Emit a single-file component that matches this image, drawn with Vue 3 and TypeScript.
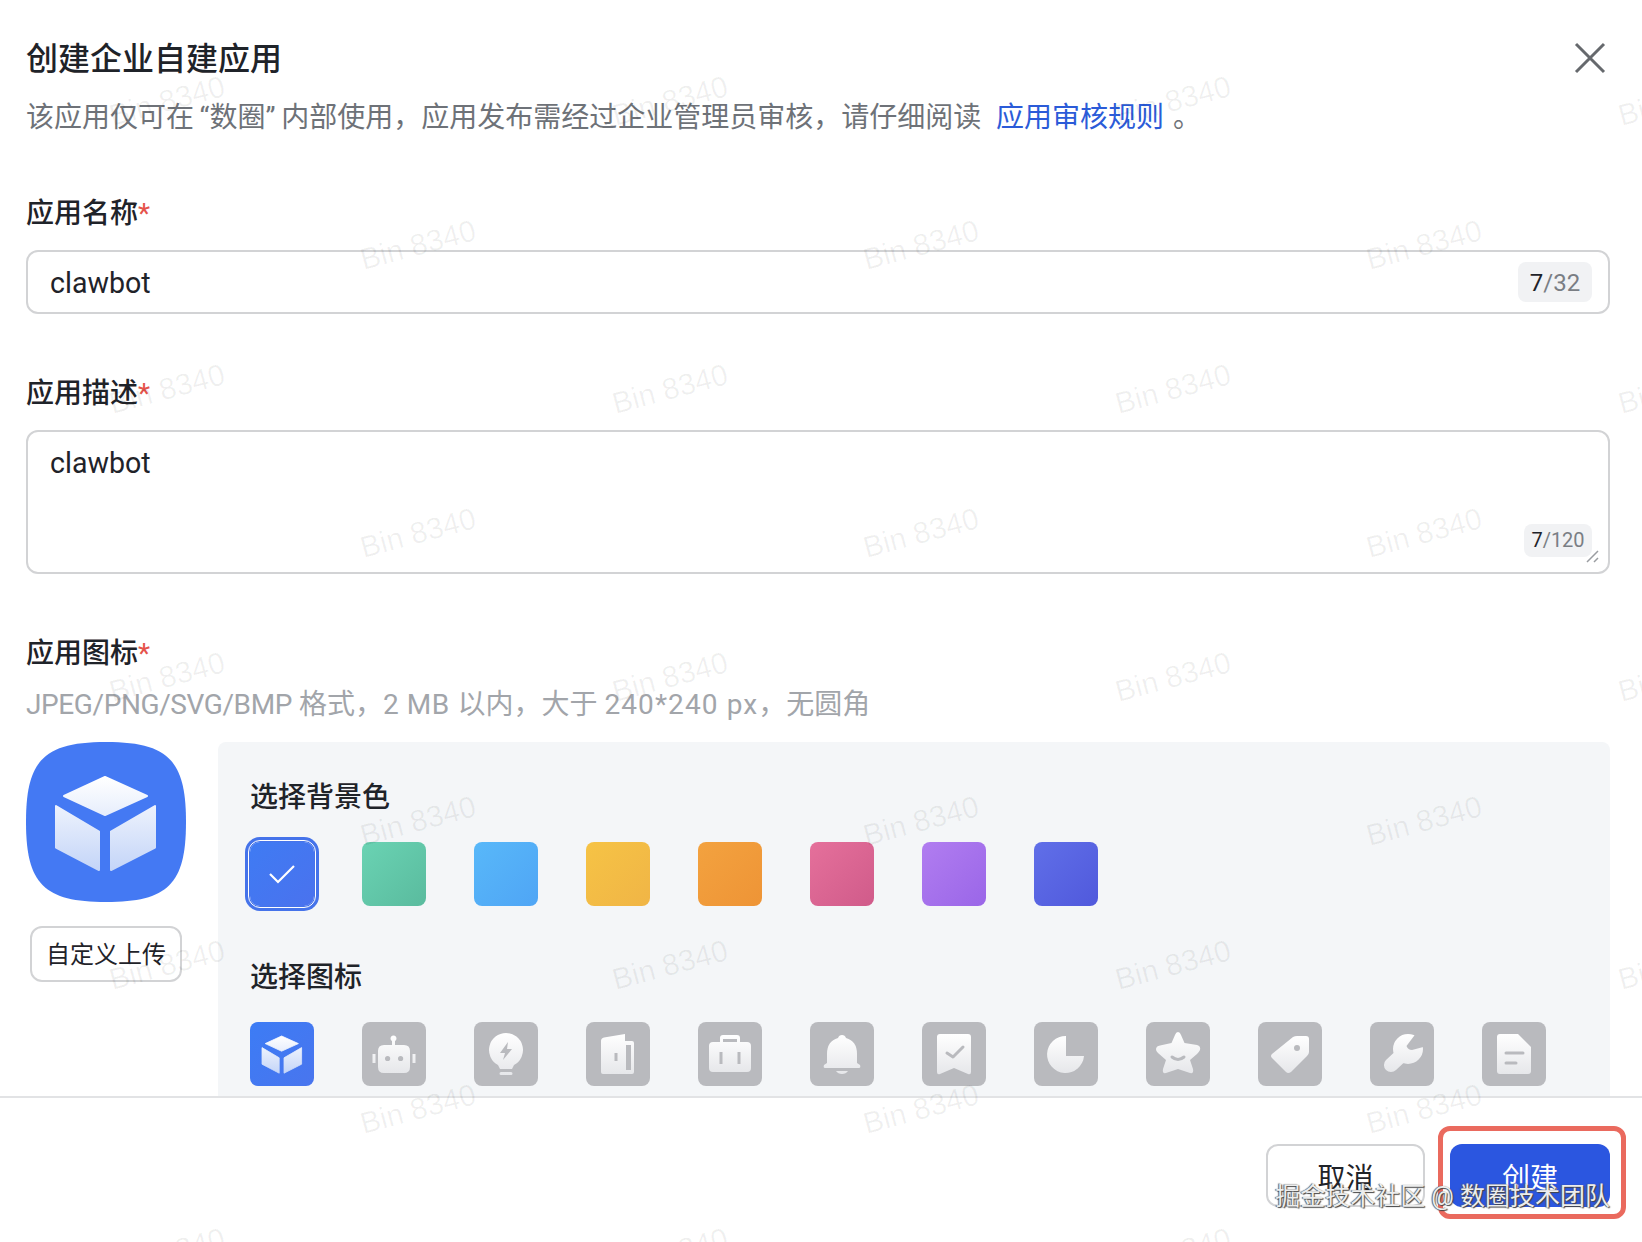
<template>
  <div class="page">
    <svg class="defs" width="0" height="0" aria-hidden="true">
      <defs>
        <linearGradient id="face-white" x1="0" y1="0" x2="0" y2="1">
          <stop offset="0" stop-color="#ffffff" />
          <stop offset="1" stop-color="#e6e7ea" />
        </linearGradient>
        <linearGradient id="face-blue" x1="0" y1="0" x2="0" y2="1">
          <stop offset="0" stop-color="#ffffff" />
          <stop offset="1" stop-color="#c4d5f8" />
        </linearGradient>
      </defs>
    </svg>

    <div class="content">
      <div class="title-row">
        <h1 class="title">创建企业自建应用</h1>
        <svg class="close" width="32" height="32" viewBox="0 0 32 32">
          <path d="M2 2 30 30M30 2 2 30" />
        </svg>
      </div>
      <p class="desc">
        该应用仅可在<span class="q open">“</span>数圈<span class="q close-q">”</span>内部使用，应用发布需经过企业管理员审核，请仔细阅读
        <a class="link">应用审核规则</a>
        。
      </p>

      <div class="label first">应用名称<i>*</i></div>
      <div class="field input">
        clawbot
        <span class="count large"><b>7</b>/32</span>
      </div>

      <div class="label">应用描述<i>*</i></div>
      <div class="field textarea">
        clawbot
        <span class="count small"><b>7</b>/120</span>
        <svg class="grip" width="13" height="13" viewBox="0 0 13 13">
          <path d="M1 12 12 1M8 12 12 8" />
        </svg>
      </div>

      <div class="label">应用图标<i>*</i></div>
      <div class="hint"><span class="caps">JPEG/PNG/SVG/BMP</span> 格式，<span class="mb">2 MB </span>以内，大于 <span class="digits">240*240 px</span>，无圆角</div>

      <div class="icon-row">
        <div class="preview">
          <svg width="160" height="160" viewBox="0 0 160 160">
            <path class="squircle" d="M80 0C142 0 160 18 160 80S142 160 80 160 0 142 0 80 18 0 80 0Z" />
            <g fill="url(#face-blue)" stroke="url(#face-blue)" stroke-width="2" stroke-linejoin="round">
              <path :d="cube" />
            </g>
          </svg>
          <button class="btn upload">自定义上传</button>
        </div>

        <div class="panel">
          <div class="panel-title">选择背景色</div>
          <div class="tiles">
            <div
              v-for="(c, i) in colors"
              :key="c"
              class="tile"
              :class="{ selected: i === 0 }"
              :style="{ background: c }"
            >
              <svg v-if="i === 0" width="28" height="20" viewBox="0 0 28 20">
                <path d="M2 10 10 18 26 2" />
              </svg>
            </div>
          </div>

          <div class="panel-title second">选择图标</div>
          <div class="tiles">
            <div class="tile cube-tile">
              <svg width="64" height="64" viewBox="0 0 160 160">
                <g fill="url(#face-blue)" stroke="url(#face-blue)" stroke-width="2" stroke-linejoin="round">
                  <path :d="cube" />
                </g>
              </svg>
            </div>
            <div v-for="ic in icons" :key="ic.name" class="tile gray">
              <svg width="64" height="64" viewBox="0 0 64 64">
                <path class="face" :d="ic.face" />
                <path v-if="ic.mark" class="mark" :d="ic.mark" />
                <path v-if="ic.cut" class="cut" :d="ic.cut" />
              </svg>
            </div>
          </div>
        </div>
      </div>
    </div>

    <div class="footer">
      <button class="btn cancel">取消</button>
      <button class="btn primary">
        创建
        <span class="marker"></span>
      </button>
      <div class="credit">掘金技术社区 @ 数圈技术团队</div>
    </div>

    <div class="watermarks">
      <span
        v-for="m in marks"
        :key="m.id"
        class="wm"
        :style="{ left: m.x + 'px', top: m.y + 'px' }"
      >Bin 8340</span>
    </div>
  </div>
</template>

<script setup lang="ts">
interface IconDef {
  name: string
  face: string
  mark?: string
  cut?: string
}

const cube =
  'M79 35 121 54 79 73 38 54ZM30 64 73 89.500V128L30 105.500ZM129 64 85 89.500V128L129 105.500Z'

const colors = [
  'linear-gradient(135deg, #3f7bf3, #4a72ee)',
  'linear-gradient(135deg, #6ad3b3, #5abb9e)',
  'linear-gradient(135deg, #58b8f9, #4fa5f5)',
  'linear-gradient(135deg, #f6c345, #f0b546)',
  'linear-gradient(135deg, #f3a23f, #ee9436)',
  'linear-gradient(135deg, #e5709b, #d05b8a)',
  'linear-gradient(135deg, #b17df0, #9a66e8)',
  'linear-gradient(135deg, #606fe8, #5059dc)',
]

const icons: IconDef[] = [
  {
    name: 'robot',
    face:
      'M22 23H30V19A3 3 0 1 1 33 19V23H42Q48 23 48 29V45Q48 51 42 51H22Q16 51 16 45V29Q16 23 22 23ZM10.5 32H13.5V41H10.5ZM50.5 32H53.5V41H50.5Z',
    cut: 'M23 36.5A2.6 2.6 0 1 0 28.2 36.5 2.6 2.6 0 1 0 23 36.5ZM36 36.5A2.6 2.6 0 1 0 41.2 36.5 2.6 2.6 0 1 0 36 36.5Z',
  },
  {
    name: 'bulb',
    face:
      'M32 11A17 17 0 0 1 40 43L38 47H26L24 43A17 17 0 0 1 32 11ZM27 50H37Q38.500 50 38.500 51.500 38.500 53 37 53H27Q25.500 53 25.500 51.500 25.500 50 27 50Z',
    cut: 'M34 20 26 31H31L29 38 38 27H33Z',
  },
  {
    name: 'book',
    face: 'M15 19Q15 16 18 15.500L39 12V19H46Q48 19 48 21V50Q48 52 46 52H17Q15 52 15 50Z',
    cut: 'M40 23H45V48H40ZM28.500 31H31.500V39H28.500Z',
  },
  {
    name: 'case',
    face: 'M22 20V16Q22 13 25 13H39Q42 13 42 16V20H49Q53 20 53 24V46Q53 50 49 50H15Q11 50 11 46V24Q11 20 15 20Z',
    cut: 'M25 17H39V20H25ZM21.500 30H24.500V42H21.500ZM39.500 30H42.500V42H39.500Z',
  },
  {
    name: 'bell',
    face:
      'M32 13Q35 13 36 16 47 19 47 32V41L50 43Q51 46 49 46H15Q13 46 14 43L17 41V32Q17 19 28 16 29 13 32 13ZM26 49H38Q36 52 32 52 28 52 26 49Z',
  },
  {
    name: 'bookmark',
    face: 'M18 12H46Q49 12 49 15V50Q49 53 46 52L32 46 18 52Q15 53 15 50V15Q15 12 18 12Z',
    mark: 'M25 31 31 35 41 25',
  },
  {
    name: 'pie',
    face: 'M32 14V34H50A18.500 18.500 0 1 1 32 14Z',
  },
  {
    name: 'star',
    face:
      'M32 10Q34 10 35 13L38.500 21 51 23Q55 24 54 28 53 30 51 32L44 38 47 47Q48 52 44 51L32 47 20 51Q16 52 17 47L20 38 12 31Q9 28 10.500 25.500 11 24 14 23.500L25.500 21 29 13Q30 10 32 10Z',
    mark: 'M26 35Q32 40 38 35',
  },
  {
    name: 'tag',
    face: 'M39 14H48Q51 14 51 17V30Q51 32 49 34L33 50Q30 52 28 50L14 36Q12 34 14 32L35 15Q37 14 39 14Z',
    cut: 'M36 26A3 3 0 1 0 42 26 3 3 0 1 0 36 26Z',
  },
  {
    name: 'wrench',
    face:
      'M23 27A15 15 0 1 0 53 27 15 15 0 1 0 23 27ZM31 24 16 38A7 7 0 0 0 26 48L41 34Z',
    cut: 'M47 10 36.500 24Q38 28 42 28L57 24V10Z',
  },
  {
    name: 'doc',
    face: 'M18 12H36L49 25V49Q49 52 46 52H18Q15 52 15 49V15Q15 12 18 12Z',
    mark: 'M24 31H41M24 41H34',
  },
]

// rows of the "Bin 8340" tiling, every other row is shifted by half a column
const marks: { id: number; x: number; y: number }[] = []
for (let row = 0; row < 9; row++) {
  const offset = row % 2 === 0 ? 167 : 418
  for (let col = 0; col < 4; col++) {
    marks.push({ id: row * 10 + col, x: offset + col * 503, y: 101 + row * 144 })
  }
}
</script>

<style>
html,
body {
  margin: 0;
  background: #fff;
}
</style>

<style scoped>
.page {
  position: relative;
  width: 1642px;
  height: 1242px;
  overflow: hidden;
  display: flex;
  flex-direction: column;
  background: #fff;
  color: #1f2329;
  font-family: Roboto, "Noto Sans CJK SC", sans-serif;
}

.defs {
  position: absolute;
}

.content {
  flex: none;
  width: 1584px;
  height: 1058px;
  padding: 38px 32px 0 26px;
  overflow: hidden;
  border-bottom: 2px solid #e2e3e5;
}

.title-row {
  display: flex;
  justify-content: space-between;
  align-items: flex-start;
  height: 40px;
}

.title {
  margin: 1px 0 0;
  font-size: 32px;
  line-height: 40px;
  font-weight: 500;
}

.close {
  margin: 4px 4px 0 0;
}

.close path {
  fill: none;
  stroke: #66696d;
  stroke-width: 3;
}

.desc {
  margin: 22px 0 0;
  font-size: 28px;
  line-height: 36px;
  color: #6e7278;
}

.q.open {
  margin-left: 5.6px;
}

.q.close-q {
  margin-right: 5.6px;
}

.link {
  color: #2b5bd8;
  margin: 0 2px 0 8px;
}

.label {
  margin-top: 60px;
  margin-bottom: 18px;
  padding-top: 2px;
  font-size: 28px;
  line-height: 36px;
  font-weight: 500;
}

.label.first {
  margin-top: 58px;
}

.label i {
  color: #e5534b;
  font-style: normal;
  font-weight: 400;
}

.field {
  position: relative;
  box-sizing: border-box;
  border: 2px solid #d2d3d5;
  border-radius: 12px;
  padding: 0 22px;
  font-size: 28.6px;
}

.input {
  height: 64px;
  line-height: 62px;
}

.textarea {
  height: 144px;
  padding-top: 11px;
  line-height: 40px;
}

.count {
  position: absolute;
  background: #f1f2f4;
  border-radius: 8px;
  color: #7a7e84;
  text-align: center;
}

.count b {
  color: #1f2329;
  font-weight: 400;
}

.count.large {
  right: 16px;
  top: 10px;
  width: 74px;
  height: 40px;
  font-size: 24px;
  line-height: 43px;
}

.count.small {
  right: 16px;
  bottom: 15px;
  width: 68px;
  height: 33px;
  font-size: 20px;
  line-height: 33px;
}

.grip {
  position: absolute;
  right: 9px;
  bottom: 9px;
}

.grip path {
  fill: none;
  stroke: #9a9da1;
  stroke-width: 1.5;
}

.hint {
  margin-top: -3px;
  font-size: 28px;
  line-height: 36px;
  color: #a2a5aa;
}

.caps {
  letter-spacing: -0.4px;
}

.mb {
  letter-spacing: 0.6px;
}

.digits {
  letter-spacing: 1.1px;
}

.icon-row {
  display: flex;
  gap: 32px;
  margin-top: 19px;
}

.preview {
  flex: none;
  width: 160px;
  display: flex;
  flex-direction: column;
}

.preview svg {
  display: block;
}

.squircle {
  fill: #4479f3;
}

.btn {
  box-sizing: border-box;
  border: 2px solid #d2d3d5;
  background: #fff;
  font-family: inherit;
  color: #1f2329;
  padding: 0;
}

.upload {
  width: 152px;
  height: 56px;
  margin: 24px 0 0 4px;
  padding-bottom: 4px;
  border-radius: 12px;
  font-size: 24px;
}

.panel {
  flex: 1;
  height: 400px;
  box-sizing: border-box;
  padding: 36px 32px 0;
  background: #f4f6f8;
  border-radius: 8px 8px 0 0;
}

.panel-title {
  padding-top: 2px;
  margin-bottom: 26px;
  font-size: 28px;
  line-height: 36px;
  font-weight: 500;
}

.panel-title.second {
  margin-top: 52px;
}

.tiles {
  display: flex;
  gap: 48px;
}

.tile {
  position: relative;
  width: 64px;
  height: 64px;
  border-radius: 8px;
  display: flex;
  align-items: center;
  justify-content: center;
}

.tile svg path {
  fill: none;
  stroke: #fff;
  stroke-width: 2.2;
}

.tile.selected {
  outline: 1.5px solid #fff;
  outline-offset: 1px;
  box-shadow: 0 0 0 5px #4573ea;
  border-radius: 10px;
}

.cube-tile {
  background: linear-gradient(135deg, #3c7cf5, #4975ee);
}

.gray {
  background: #b9babe;
}

.tile.cube-tile svg path {
  fill: url(#face-blue);
  stroke: url(#face-blue);
  stroke-width: 2;
  stroke-linejoin: round;
}

.tile.gray svg .face {
  fill: url(#face-white);
  stroke: none;
}

.tile.gray svg .mark {
  fill: none;
  stroke: #b9babe;
  stroke-width: 3;
  stroke-linecap: round;
  stroke-linejoin: round;
}

.tile.gray svg .cut {
  fill: #b9babe;
  stroke: none;
}

.footer {
  position: relative;
  flex: 1;
  display: flex;
  justify-content: flex-end;
  gap: 25px;
  padding: 46px 32px 0 0;
}

.footer .btn {
  height: 63px;
  padding-top: 1px;
  border-radius: 12px;
  font-size: 28px;
}

.cancel {
  width: 159px;
}

.footer .primary {
  position: relative;
  width: 160px;
  border: none;
  background: #2b56e0;
  color: #fff;
}

.marker {
  position: absolute;
  left: -12px;
  right: -16px;
  top: -18px;
  bottom: -12px;
  border: 5px solid #ea6a5e;
  border-radius: 12px;
}

.credit {
  position: absolute;
  right: 32px;
  top: 81px;
  font-size: 25px;
  line-height: 36px;
  white-space: nowrap;
  color: #eceded;
  text-shadow: 1px 1px 1px #444, -1px 0 1px #555;
}

.watermarks {
  position: absolute;
  inset: 0;
  pointer-events: none;
}

.wm {
  position: absolute;
  transform: translate(-50%, -50%) rotate(-15deg);
  font-family: "Liberation Sans", sans-serif;
  font-size: 30px;
  color: rgba(0, 0, 0, 0.06);
  white-space: nowrap;
}
</style>
